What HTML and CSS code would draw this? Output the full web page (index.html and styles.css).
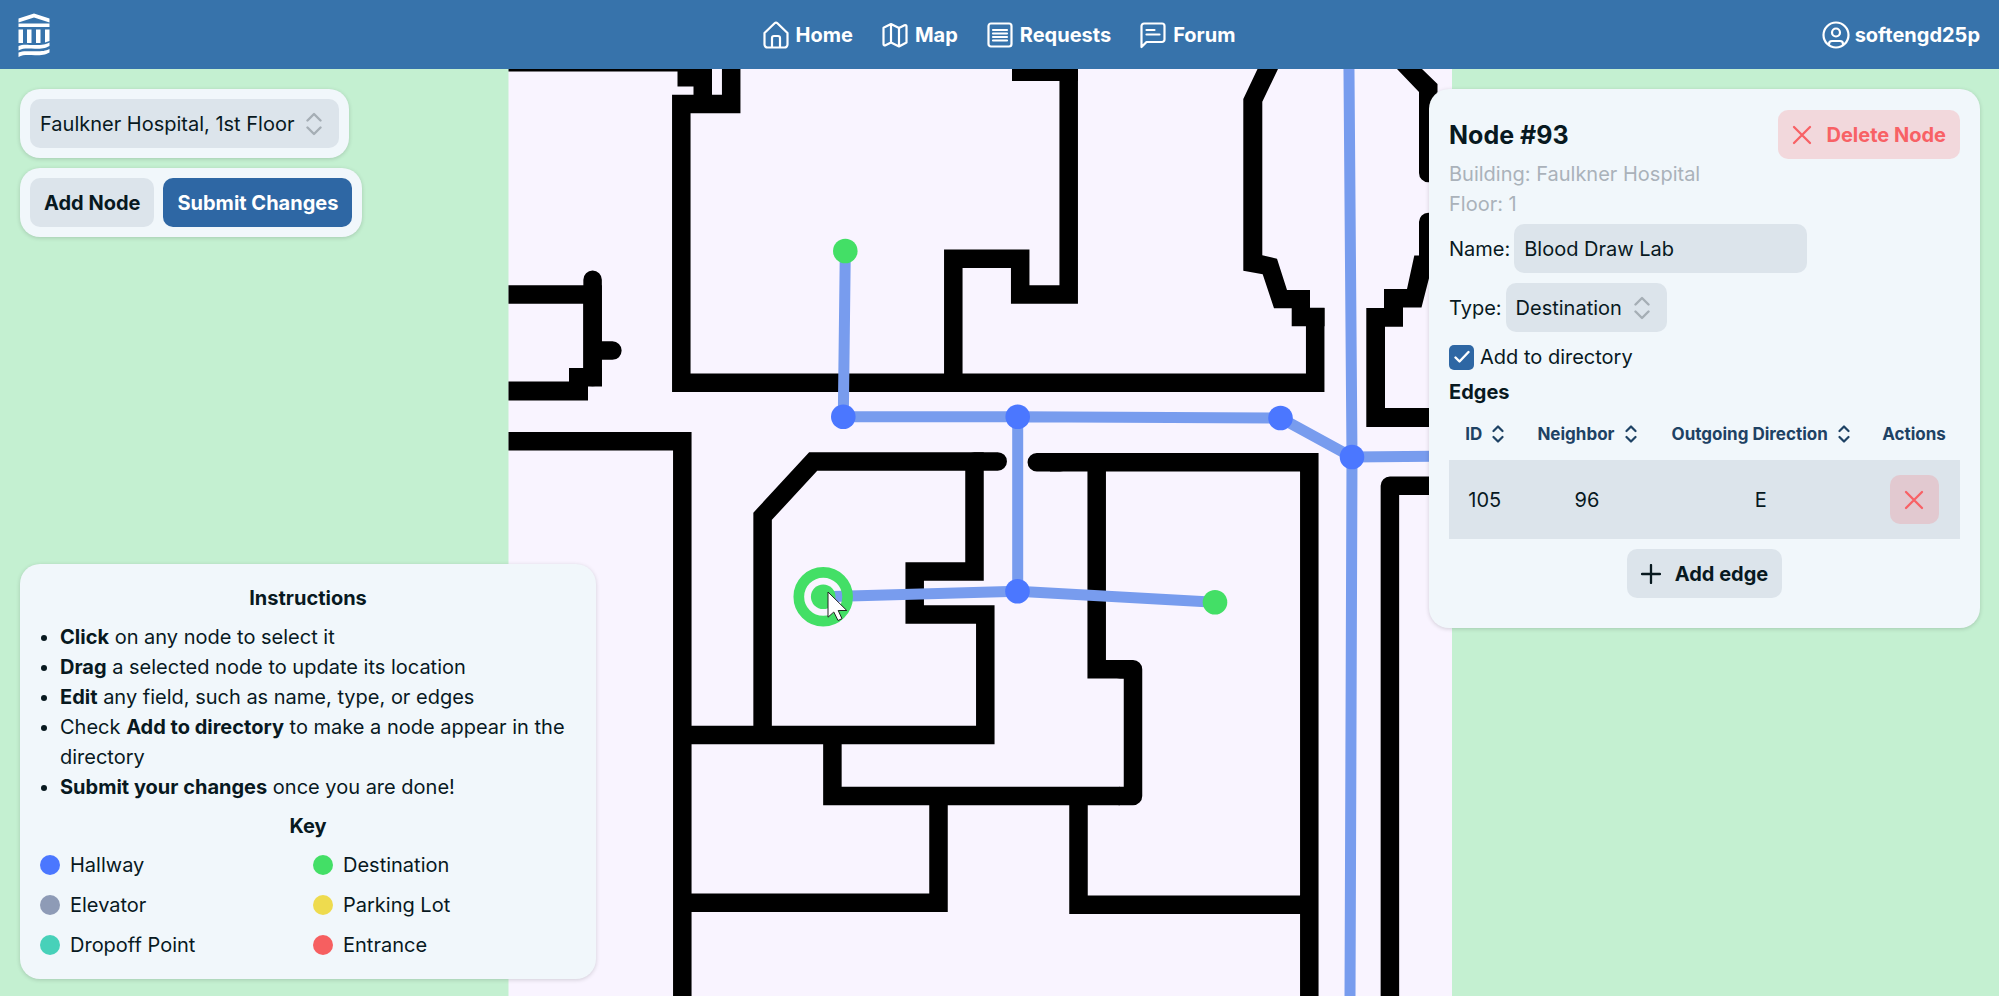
FILE: index.html
```html
<!DOCTYPE html>
<html lang="en">
<head>
<meta charset="utf-8">
<title>Map Editor</title>
<link rel="stylesheet" href="styles.css">
</head>
<body class="page">
<header class="topbar">
  <a class="brand" href="#" aria-label="Home page">
    <svg class="brand-logo" viewBox="0 0 32 44" fill="#fff">
      <path d="M0.5 5.5 16 0.5 31.5 5.5V9.5L16 4.5 0.5 9.5Z"/>
      <path d="M0.5 10.5h31v3.500h-31zM0.500 16.500h4.500v13.500h-4.500zM9 16.500h4.500v13.500H9zM18 16.500h4.500v13.500H18zM27 16.500h4.500v11.500L27 29.500z"/>
      <path d="M0.500 33C5 31 9 32 17 32S27 31.500 31.500 29.500V33C27 35.500 24 35.700 17 35.700S5 35 0.500 37.500Z"/>
      <path d="M0.500 39.500C5 37.500 9 38.300 17 38.300S27 38 31.500 36V39.500C27 42 24 42.200 17 42.200S5 41.500 0.500 44Z"/>
    </svg>
  </a>
  <nav class="nav">
    <a class="nav-link" href="#">
      <svg class="nav-icon" viewBox="0 0 26 28"><path d="M1.500 12 11.600 2.300a2 2 0 0 1 2.800 0L24.500 12V23.500a3 3 0 0 1-3 3h-17a3 3 0 0 1-3-3ZM9 26V17a2 2 0 0 1 2-2h4a2 2 0 0 1 2 2v9"/></svg>
      Home</a>
    <a class="nav-link" href="#">
      <svg class="nav-icon" viewBox="0 0 26 28"><path d="M1.500 6.800 9 3l8 4 5.500-2.800a1.400 1.400 0 0 1 2 1.200V21.500L17 25.500l-8-4-5.500 2.800a1.400 1.400 0 0 1-2-1.200ZM9 3v18.500M17 7v18.500"/></svg>
      Map</a>
    <a class="nav-link" href="#">
      <svg class="nav-icon" viewBox="0 0 26 28"><rect x="1.500" y="2.500" width="23" height="23" rx="2.500"/><path d="M6 9h14M6 12.500h14M6 16h14M6 19.500h14"/></svg>
      Requests</a>
    <a class="nav-link" href="#">
      <svg class="nav-icon" viewBox="0 0 26 28"><path d="M1.500 26V5a2.500 2.500 0 0 1 2.500-2.500h18A2.500 2.500 0 0 1 24.500 5v13.500a2.500 2.500 0 0 1-2.500 2.500H6.500ZM6.500 9h8M6.500 13.500h13"/></svg>
      Forum</a>
  </nav>
  <a class="account" href="#">
    <svg class="account-icon" viewBox="0 0 28 28"><circle cx="14" cy="14" r="12.500"/><circle cx="14" cy="11.500" r="4"/><path d="M7 24v-1a3 3 0 0 1 3-3h8a3 3 0 0 1 3 3v1"/></svg>
    softengd25p</a>
</header>

<main class="workspace">
  <svg class="map" viewBox="0 69 1999 927" preserveAspectRatio="xMidYMid slice" role="img" aria-label="Floor plan">
    <rect x="508.500" y="69" width="943.500" height="927" fill="#f9f4ff"/>
    <g fill="#000">
      <path d="M508.500 69H712V113H693.500V86.500H677.500V71.500H508.500Z"/>
      <path d="M1012 69H1078V81H1012Z"/>
      <path d="M1257.500 69H1278L1262.300 101.700V255.300L1277 258.700 1287 290H1310V307.700H1324.500V326.300H1291.700V308.300H1274L1262.700 274.300 1243.300 270.700V99Z"/>
      <path d="M1397 69H1422L1437.500 84V173a9.200 9.200 0 0 1-18.500 0V92Z"/>
      <path d="M1419 222a9.200 9.200 0 0 1 18.500 0V245L1421.500 307.500H1403V326.700H1385V408H1440V427H1366.300V308H1384V289H1407L1414.300 255.500H1419Z"/>
      <path d="M569 368H602V386.500H588V400.500H508.500V381.500H569Z"/>
    </g>
    <g class="walls">
      <path d="M731.200 69V103.900H681.300V382.700H1315.200V308"/>
      <path d="M1068.700 69V294.600H1020.200V258.700H953.300V382"/>
      <path d="M508.500 294.500H592.600V377M508.500 441.300H682.300V996"/>
      <path class="round" d="M592.600 377V279.800M592.600 350.600H612.400"/>
      <path d="M762.600 735V516.300L813.200 461.400H974.500V571.600H914.700V614.400H985.300V735H682.300"/>
      <path class="round" d="M974.500 461.400H997.700M1036.800 462.300H1060"/>
      <path d="M1050 462.300H1309.300V996M1309.300 904.800H1078.500V800"/>
      <path d="M1096.700 462.300V669.300H1125"/>
      <path class="round" d="M1120 669.300H1133V795.900H1120"/>
      <path d="M832.400 735V795.900H1120M938.500 796V902.800H682.300"/>
      <path class="round" d="M1440 485.800H1389.900V1010"/>
    </g>
    <g class="links">
      <path d="M845.300 251 843.300 416.700H1017.700L1280.500 418 1352 457 1460 456M1348.900 60 1352 457 1350 1000M1017.700 416.700V591.300L823.200 596.700M1017.700 591.300 1215 602.300"/>
    </g>
    <g fill="#4b77ff">
      <circle cx="843.300" cy="416.700" r="12.300"/><circle cx="1017.700" cy="416.700" r="12.300"/><circle cx="1280.500" cy="418" r="12.300"/><circle cx="1352" cy="457" r="12.300"/><circle cx="1017.500" cy="591.300" r="12.300"/>
    </g>
    <g fill="#43df66">
      <circle cx="845.300" cy="251" r="12.300"/><circle cx="1215" cy="602.300" r="12.300"/><circle cx="823.200" cy="596.700" r="12.300"/>
    </g>
    <circle cx="823.200" cy="596.700" r="24.400" fill="none" stroke="#43df66" stroke-width="10.700"/>
    <path d="M828 592V617.200L833.800 612 838 620.500 842 618.700 838.200 610.500H846.800Z" fill="#fff" stroke="#222" stroke-width="1"/>
  </svg>

  <div class="overlay">
    <div class="left">
      <div class="tools">
        <div class="card toolbar">
          <div class="picker">
            <select class="select" aria-label="Floor"><option>Faulkner Hospital, 1st Floor</option></select>
            <svg class="picker-icon" viewBox="0 0 16 24"><path d="M1.500 8.500 8 2l6.500 6.500M1.500 15.500 8 22l6.500-6.500"/></svg>
          </div>
        </div>
        <div class="card toolbar">
          <button class="btn" type="button">Add Node</button>
          <button class="btn btn-primary" type="button">Submit Changes</button>
        </div>
      </div>

      <section class="card help">
        <h2 class="help-title">Instructions</h2>
        <ul class="help-list">
          <li><b>Click</b> on any node to select it</li>
          <li><b>Drag</b> a selected node to update its location</li>
          <li><b>Edit</b> any field, such as name, type, or edges</li>
          <li>Check <b>Add to directory</b> to make a node appear in the directory</li>
          <li><b>Submit your changes</b> once you are done!</li>
        </ul>
        <h2 class="help-title">Key</h2>
        <div class="key">
          <span class="key-item"><i class="dot dot-hallway"></i>Hallway</span>
          <span class="key-item"><i class="dot dot-destination"></i>Destination</span>
          <span class="key-item"><i class="dot dot-elevator"></i>Elevator</span>
          <span class="key-item"><i class="dot dot-parking"></i>Parking Lot</span>
          <span class="key-item"><i class="dot dot-dropoff"></i>Dropoff Point</span>
          <span class="key-item"><i class="dot dot-entrance"></i>Entrance</span>
        </div>
      </section>
    </div>

    <aside class="card node">
      <div class="node-head">
        <h1 class="node-title">Node #93</h1>
        <button class="btn btn-danger" type="button">
          <svg class="btn-icon" viewBox="0 0 20 20"><path d="M2 2 18 18M18 2 2 18"/></svg>
          Delete Node</button>
      </div>
      <p class="muted">Building: Faulkner Hospital</p>
      <p class="muted">Floor: 1</p>
      <div class="field">
        <label for="node-name">Name:</label>
        <input class="input" id="node-name" type="text" value="Blood Draw Lab">
      </div>
      <div class="field">
        <label for="node-type">Type:</label>
        <div class="picker">
          <select class="select" id="node-type"><option>Destination</option></select>
          <svg class="picker-icon" viewBox="0 0 16 24"><path d="M1.500 8.500 8 2l6.500 6.500M1.500 15.500 8 22l6.500-6.500"/></svg>
        </div>
      </div>
      <div class="check-row">
        <span class="check">
          <input class="check-input" id="in-directory" type="checkbox" checked>
          <svg class="check-icon" viewBox="0 0 16 16"><path d="M1.500 8.500 5.500 12.500 14.500 3"/></svg>
        </span>
        <label for="in-directory">Add to directory</label>
      </div>
      <h2 class="edges-title">Edges</h2>
      <table class="edges">
        <colgroup><col class="col-id"><col class="col-neighbor"><col class="col-direction"><col class="col-actions"></colgroup>
        <thead>
          <tr>
            <th><span class="sort">ID<svg class="sort-icon" viewBox="0 0 12 18"><path d="M1.500 6 6 1.500 10.500 6M1.500 12 6 16.500 10.500 12"/></svg></span></th>
            <th><span class="sort">Neighbor<svg class="sort-icon" viewBox="0 0 12 18"><path d="M1.500 6 6 1.500 10.500 6M1.500 12 6 16.500 10.500 12"/></svg></span></th>
            <th><span class="sort">Outgoing Direction<svg class="sort-icon" viewBox="0 0 12 18"><path d="M1.500 6 6 1.500 10.500 6M1.500 12 6 16.500 10.500 12"/></svg></span></th>
            <th>Actions</th>
          </tr>
        </thead>
        <tbody>
          <tr>
            <td>105</td>
            <td>96</td>
            <td>E</td>
            <td><button class="btn btn-danger btn-square" type="button" aria-label="Delete edge"><svg class="btn-icon" viewBox="0 0 20 20"><path d="M2 2 18 18M18 2 2 18"/></svg></button></td>
          </tr>
        </tbody>
      </table>
      <button class="btn add-edge" type="button">
        <svg class="btn-icon" viewBox="0 0 20 20"><path d="M10 1V19M1 10H19"/></svg>
        Add edge</button>
    </aside>
  </div>
</main>
</body>
</html>
```
FILE: styles.css
```css
* { box-sizing: border-box; }

.page {
  margin: 0;
  min-height: 100vh;
  display: flex;
  flex-direction: column;
  background: #c4f0d1;
  color: #08191f;
  font-family: Inter, sans-serif;
  font-size: 20px;
  line-height: 30px;
}

h1, h2, p, ul { margin: 0; }

/* Top bar */
.topbar {
  display: grid;
  grid-template-columns: 1fr auto 1fr;
  align-items: center;
  height: 69px;
  padding: 0 19px 0 18px;
  background: #3773ab;
  color: #fff;
  font-weight: 700;
}
.brand { justify-self: start; display: flex; }
.brand-logo { width: 32px; height: 44px; }
.nav { display: flex; gap: 29px; }
.nav-link, .account {
  display: flex;
  align-items: center;
  gap: 7px;
  color: inherit;
  text-decoration: none;
}
.account { justify-self: end; gap: 5px; }
.nav-icon, .account-icon {
  fill: none;
  stroke: #fff;
  stroke-width: 2.200px;
  stroke-linecap: round;
  stroke-linejoin: round;
}
.nav-icon { width: 26px; height: 28px; }
.account-icon { width: 28px; height: 28px; }

/* Map and the layer of cards over it */
.workspace {
  flex: 1;
  display: grid;
  grid-template: minmax(0, 1fr) / minmax(0, 1fr);
  position: relative;
}
.map { position: absolute; inset: 0; width: 100%; height: 100%; }
.walls { fill: none; stroke: #000; stroke-width: 18.500px; }
.round { stroke-linecap: round; stroke-linejoin: round; }
.links { fill: none; stroke: #789cee; stroke-width: 11px; }

.overlay {
  position: relative;
  display: flex;
  justify-content: space-between;
  align-items: flex-start;
  padding: 20px 19px 17px 20px;
}
.left {
  align-self: stretch;
  display: flex;
  flex-direction: column;
  justify-content: space-between;
  gap: 20px;
  width: 576px;
}
.tools {
  display: flex;
  flex-direction: column;
  align-items: flex-start;
  gap: 10px;
}
.card {
  background: #f1f7fb;
  border-radius: 20px;
  box-shadow: 0 1px 4px rgba(0, 0, 0, 0.16);
}
.toolbar { display: flex; gap: 9px; padding: 10px; }

/* Controls */
.btn, .select, .input {
  height: 49px;
  border: 0;
  border-radius: 10px;
  background: #dce4eb;
  color: inherit;
  font: inherit;
}
.btn {
  display: inline-flex;
  align-items: center;
  justify-content: center;
  gap: 14px;
  padding: 0 14px;
  font-weight: 700;
  white-space: nowrap;
}
.btn-primary { background: #2e67a4; color: #fff; }
.btn-danger { background: rgba(250, 93, 98, 0.2); color: #f86165; }
.btn-square { width: 49px; padding: 0; vertical-align: middle; }
.btn-icon {
  width: 20px;
  height: 20px;
  fill: none;
  stroke: currentColor;
  stroke-width: 2.300px;
  stroke-linecap: round;
}
.picker { display: inline-grid; align-items: center; }
.select, .picker-icon { grid-area: 1 / 1; }
.select { appearance: none; padding: 0 44px 0 10px; }
.picker-icon {
  justify-self: end;
  width: 16px;
  height: 24px;
  margin-right: 17px;
  fill: none;
  stroke: #a5aeb5;
  stroke-width: 2.400px;
  stroke-linecap: round;
  stroke-linejoin: round;
  pointer-events: none;
}
.input { width: 293px; padding: 0 10px; }

/* Instructions */
.help {
  display: flex;
  flex-direction: column;
  gap: 9px;
  padding: 19px 20px;
}
.help-title { font-size: 20px; text-align: center; }
.help-list { padding-left: 20px; }
.key { display: grid; grid-template-columns: 1fr 1fr; gap: 10px; }
.key-item { display: flex; align-items: center; gap: 10px; }
.dot { width: 20px; height: 20px; border-radius: 50%; }
.dot-hallway { background: #4b77ff; }
.dot-destination { background: #43df66; }
.dot-elevator { background: #8e9bb6; }
.dot-parking { background: #eedb4e; }
.dot-dropoff { background: #47d1b9; }
.dot-entrance { background: #f65f60; }

/* Selected node */
.node {
  display: flex;
  flex-direction: column;
  width: 551px;
  padding: 21px 20px 30px;
}
.node-head { display: flex; align-items: center; justify-content: space-between; }
.node-title { font-size: 25px; }
.muted { color: #aab2ba; }
.field { display: flex; align-items: center; gap: 4px; margin-bottom: 10px; }
.muted + .field { margin-top: 5px; }
.check-row { display: flex; align-items: center; gap: 6px; padding: 0 0 5px; }
.check { display: inline-grid; place-items: center; }
.check-input, .check-icon { grid-area: 1 / 1; }
.check-input {
  appearance: none;
  width: 25px;
  height: 25px;
  margin: 0;
  border-radius: 5px;
  background: #2e67a4;
}
.check-icon {
  width: 16px;
  height: 16px;
  fill: none;
  stroke: #fff;
  stroke-width: 2.400px;
  stroke-linecap: round;
  stroke-linejoin: round;
  pointer-events: none;
}
.edges-title { font-size: 20px; }
.edges { width: 100%; border-collapse: collapse; table-layout: fixed; }
.col-id { width: 14%; }
.col-neighbor { width: 26%; }
.col-direction { width: 42%; }
.col-actions { width: 18%; }
.edges th {
  height: 53px;
  padding: 0;
  color: #1e4264;
  font-size: 17px;
  white-space: nowrap;
}
.sort { display: inline-flex; align-items: center; gap: 10px; }
.sort-icon {
  width: 12px;
  height: 18px;
  fill: none;
  stroke: currentColor;
  stroke-width: 2.200px;
  stroke-linecap: round;
  stroke-linejoin: round;
}
.edges td {
  height: 79px;
  padding: 0;
  background: #dce4eb;
  text-align: center;
}
.add-edge { align-self: center; margin-top: 10px; }
```
